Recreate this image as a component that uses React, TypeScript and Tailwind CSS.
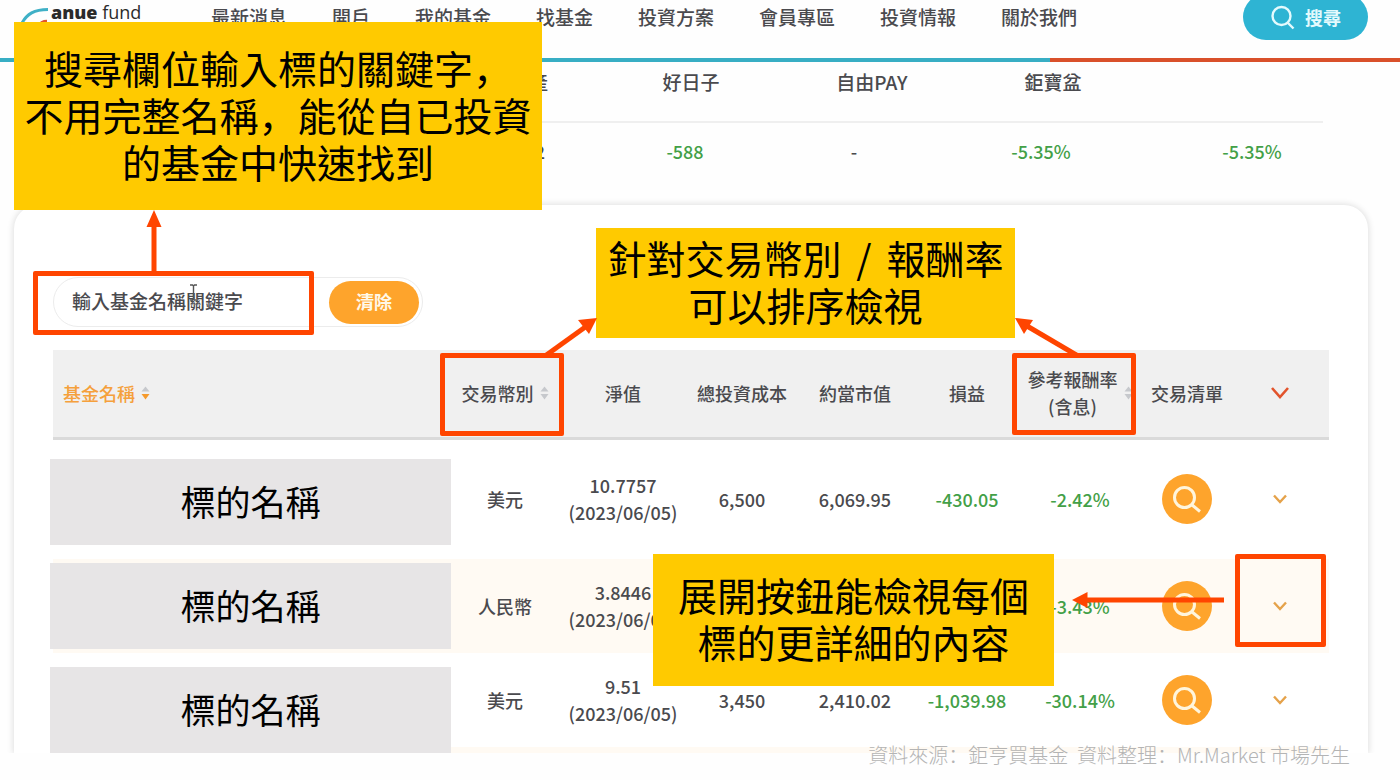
import React from "react";

const navItems = ["最新消息", "開戶", "我的基金", "找基金", "投資方案", "會員專區", "投資情報", "關於我們"];

const summaryHeads = ["資產", "好日子", "自由PAY", "鉅寶盆"];

type Fund = {
  id: string;
  currency: string;
  nav: string;
  date: string;
  cost: string;
  value: string;
  profit: string;
  rate: string;
  row: string;
};

const funds: Fund[] = [
  {
    id: "a",
    currency: "美元",
    nav: "10.7757",
    date: "(2023/06/05)",
    cost: "6,500",
    value: "6,069.95",
    profit: "-430.05",
    rate: "-2.42%",
    row: "h-[121px]",
  },
  {
    id: "b",
    currency: "人民幣",
    nav: "3.8446",
    date: "(2023/06/05)",
    cost: "",
    value: "",
    profit: "",
    rate: "-3.43%",
    row: "h-[94px] bg-[#fffaf3]",
  },
  {
    id: "c",
    currency: "美元",
    nav: "9.51",
    date: "(2023/06/05)",
    cost: "3,450",
    value: "2,410.02",
    profit: "-1,039.98",
    rate: "-30.14%",
    row: "h-[94px]",
  },
];

function SortIcon({ active = false }: { active?: boolean }) {
  return (
    <svg width="9" height="14" viewBox="0 0 9 14" aria-hidden="true" className="shrink-0">
      <path d="M4.500 0.500 8.500 5.500H0.500Z" fill="#c6c8cc" />
      <path d="M4.500 13.500 0.500 8H8.500Z" fill={active ? "#f59a2c" : "#c6c8cc"} />
    </svg>
  );
}

function Chevron({ large = false }: { large?: boolean }) {
  return large ? (
    <svg width="20" height="14" viewBox="0 0 20 14" fill="none" aria-hidden="true">
      <path d="M2 2 10 11 18 2" stroke="#e2542c" strokeWidth="2.6" />
    </svg>
  ) : (
    <svg width="14" height="10" viewBox="0 0 14 10" fill="none" aria-hidden="true">
      <path d="M1 1.500 7 8 13 1.500" stroke="#e5a24a" strokeWidth="2.4" />
    </svg>
  );
}

function RoundSearchIcon() {
  return (
    <svg width="30" height="30" viewBox="0 0 30 30" fill="none" aria-hidden="true">
      <circle cx="12.500" cy="13.500" r="10" stroke="currentColor" strokeWidth="3" />
      <path d="M19.500 20.500 28 27.500" stroke="currentColor" strokeWidth="3" />
    </svg>
  );
}

function SearchIcon() {
  return (
    <svg width="25" height="25" viewBox="0 0 25 25" fill="none" aria-hidden="true">
      <circle cx="11.500" cy="11" r="9" stroke="currentColor" strokeWidth="2.4" />
      <path d="M17.500 17.500 23.500 23.500" stroke="currentColor" strokeWidth="2.4" />
    </svg>
  );
}

function Comma() {
  return <span className="font-['Noto_Sans_CJK_SC',sans-serif]">，</span>;
}

function Header() {
  return (
    <header className="border-b-4 border-[#38aec4]">
      <div className="flex h-[58px] items-start pl-[21px] pr-8">
        <a href="#" aria-label="anue fund" className="flex w-[190px] shrink-0 items-start">
          <svg width="28" height="26" viewBox="0 0 28 26" fill="none" aria-hidden="true">
            <path d="M1 23C6 14 13 9.500 27 9.500" stroke="#3fb0c6" strokeWidth="3" />
            <path d="M17 26C19 22.500 22 21 26 21" stroke="#e2542c" strokeWidth="2.500" />
          </svg>
          <span className="ml-0.5 font-['Open_Sans',sans-serif] text-lg leading-6 text-[#2b2b2b]">
            <b className="font-extrabold">anue</b> fund
          </span>
        </a>
        <nav className="flex gap-[45px] pt-[3px] text-[19px] font-medium leading-7 text-[#4a4a4e]">
          {navItems.map((item) => (
            <a key={item} href="#" className="whitespace-nowrap">
              {item}
            </a>
          ))}
        </nav>
        <button
          type="button"
          className="-mt-1.5 ml-auto flex h-[46px] w-[125px] items-center justify-center gap-2.5 rounded-full bg-[#2eb4d3] text-lg font-bold text-[#e4fafd]"
        >
          <SearchIcon />
          搜尋
        </button>
      </div>
    </header>
  );
}

function Summary() {
  return (
    <table className="mr-[77px] ml-[53px] block text-[#4a4a4e]">
      <thead className="block border-b-2 border-[#efefef]">
        <tr className="grid h-[59px] grid-cols-[1fr_180px_182px_180px_180px] pt-1.5">
          {summaryHeads.map((h) => (
            <th key={h} className="text-center text-[19px] font-medium leading-7 first:pr-[53px] first:text-right">
              {h}
            </th>
          ))}
          <td />
        </tr>
      </thead>
      <tbody className="block">
        <tr className="grid grid-cols-[1fr_244px_94px_280px_142px] pt-3.5 text-lg font-medium leading-7">
          <td className="pr-[18px] text-right">2</td>
          <td className="text-center text-[#43a047]">-588</td>
          <td className="text-center">-</td>
          <td className="text-center text-[#43a047]">-5.35%</td>
          <td className="text-center text-[#43a047]">-5.35%</td>
        </tr>
      </tbody>
    </table>
  );
}

function FundTable() {
  return (
    <table className="w-full table-fixed text-center text-lg text-[#4a4a4e]">
      <colgroup>
        <col className="w-[397px]" />
        <col className="w-[110px]" />
        <col className="w-[126px]" />
        <col className="w-[112px]" />
        <col className="w-[114px]" />
        <col className="w-[110px]" />
        <col className="w-[116px]" />
        <col className="w-[98px]" />
        <col />
      </colgroup>
      <thead>
        <tr className="h-[88px] border-b-[3px] border-[#dadada] bg-[#f0f0f0] leading-[27px] [&>th]:font-medium">
          <th>
            <button type="button" className="flex items-center gap-1.5 pl-2.5 text-[#f5a03c]">
              基金名稱
              <SortIcon active />
            </button>
          </th>
          <th>
            <button type="button" className="mx-auto flex items-center gap-1.5">
              交易幣別
              <SortIcon />
            </button>
          </th>
          <th>淨值</th>
          <th>總投資成本</th>
          <th>約當市值</th>
          <th>損益</th>
          <th>
            <button type="button" className="mx-auto flex items-center gap-1.5 whitespace-nowrap">
              <span>
                參考報酬率
                <br />
                (含息)
              </span>
              <SortIcon />
            </button>
          </th>
          <th>交易清單</th>
          <th className="pr-1.5">
            <button type="button" aria-label="全部展開" className="mx-auto block">
              <Chevron large />
            </button>
          </th>
        </tr>
      </thead>
      <tbody className="font-medium leading-[27px]">
        {funds.map((f) => (
          <tr key={f.id} className={f.row}>
            <td />
            <td>{f.currency}</td>
            <td>
              {f.nav}
              <br />
              {f.date}
            </td>
            <td>{f.cost}</td>
            <td>{f.value}</td>
            <td className="text-[#43a047]">{f.profit}</td>
            <td className="text-[#43a047]">{f.rate}</td>
            <td>
              <button
                type="button"
                aria-label="交易清單"
                className="mx-auto flex size-[50px] items-center justify-center rounded-full bg-[#fea42c] text-[#fff5dc]"
              >
                <RoundSearchIcon />
              </button>
            </td>
            <td className="pr-1.5">
              <button type="button" aria-label="展開" className="mx-auto block">
                <Chevron />
              </button>
            </td>
          </tr>
        ))}
        <tr className="h-1.5 bg-[#fffaf3]">
          <td colSpan={9} />
        </tr>
      </tbody>
    </table>
  );
}

function Annotations() {
  return (
    <div className="pointer-events-none text-[39px] leading-[47px] text-black">
      <div className="absolute left-[50px] top-[459px] flex w-[401px] flex-col gap-[18px] text-[35px]">
        {funds.map((f) => (
          <div key={f.id} className="flex h-[86px] items-center justify-center bg-[#e7e5e6] pb-1">
            標的名稱
          </div>
        ))}
      </div>

      <div className="absolute left-[14px] top-[22px] flex h-[188px] w-[528px] items-center justify-center whitespace-nowrap bg-[#ffca00] pb-1 text-center">
        <p>
          搜尋欄位輸入標的關鍵字
          <Comma />
          <br />
          不用完整名稱
          <Comma />
          能從自已投資
          <br />
          的基金中快速找到
        </p>
      </div>
      <div className="absolute left-[596px] top-[228px] flex h-[110px] w-[419px] items-center justify-center whitespace-nowrap bg-[#ffca00] pb-1 text-center">
        <p>
          針對交易幣別<span className="px-1.5"> / </span>報酬率
          <br />
          可以排序檢視
        </p>
      </div>
      <div className="absolute left-[653px] top-[554px] flex h-[132px] w-[401px] items-center justify-center whitespace-nowrap bg-[#ffca00] pb-1 text-center">
        <p>
          展開按鈕能檢視每個
          <br />
          標的更詳細的內容
        </p>
      </div>

      <div className="absolute left-[33px] top-[271px] h-[64px] w-[281px] rounded-xs border-5 border-[#ff4500]" />
      <div className="absolute left-[440px] top-[353px] h-[83px] w-[124px] rounded-xs border-5 border-[#ff4500]" />
      <div className="absolute left-[1012px] top-[353px] h-[82px] w-[124px] rounded-xs border-5 border-[#ff4500]" />
      <div className="absolute left-[1235px] top-[554px] h-[93px] w-[91px] rounded-xs border-5 border-[#ff4500]" />

      <svg className="absolute left-[146px] top-[210px]" width="16" height="64" viewBox="0 0 16 64" aria-hidden="true">
        <path d="M8 0 15.500 17H10.500V64H5.500V17H0.500Z" fill="#ff4500" />
      </svg>
      <svg className="absolute left-[540px] top-[316px]" width="58" height="44" viewBox="0 0 58 44" aria-hidden="true">
        <path d="M5 40 46 10.500" stroke="#ff4500" strokeWidth="5" />
        <path d="M57 2 49 18 38 4Z" fill="#ff4500" />
      </svg>
      <svg className="absolute left-[1014px] top-[316px]" width="68" height="42" viewBox="0 0 68 42" aria-hidden="true">
        <path d="M64 40 13 10" stroke="#ff4500" strokeWidth="5" />
        <path d="M1 2 19 4 10 18Z" fill="#ff4500" />
      </svg>
      <svg className="absolute left-[1072px] top-[592px]" width="152" height="16" viewBox="0 0 152 16" aria-hidden="true">
        <path d="M0 8 15.500 0V5.500H152V10.500H15.500V16Z" fill="#ff4500" />
      </svg>
    </div>
  );
}

export default function App() {
  return (
    <div className="relative min-h-screen overflow-hidden bg-[#fefefe] font-['Noto_Sans_CJK_TC','Noto_Sans_CJK_SC',sans-serif]">
      <div className="relative">
        <Header />
        <div className="absolute right-0 top-[58px] h-1 w-1/4 bg-[#d9502a]" />
      </div>

      <main className="overflow-hidden">
        <Summary />
        <section className="ml-[14px] mr-[32px] mt-10 rounded-t-[24px] bg-white px-[39px] pt-[72px] shadow-[0_0_6px_1px_rgba(0,0,0,0.12)]">
          <form
            className="mb-[23px] flex h-[50px] w-[370px] items-center rounded-full border border-[#ececec] pl-[18px] pr-[3px]"
            onSubmit={(e) => e.preventDefault()}
          >
            <input
              type="text"
              aria-label="輸入基金名稱關鍵字"
              placeholder="輸入基金名稱關鍵字"
              className="min-w-0 flex-1 bg-transparent pb-0.5 text-[19px] font-medium text-[#4a4a4e] placeholder:text-[#4a4a4e]"
            />
            <button
              type="reset"
              className="h-[43px] w-[90px] rounded-full bg-[#fea42c] pb-0.5 text-lg font-bold text-[#fff8e8]"
            >
              清除
            </button>
          </form>
          <FundTable />
        </section>
      </main>

      <footer className="relative -mt-2.5 whitespace-pre pr-[50px] text-right text-xl font-light leading-6 text-[#b4b4b4]">
        資料來源<span className="font-['Noto_Sans_CJK_SC',sans-serif]">：</span>鉅亨買基金{"  "}資料整理
        <span className="font-['Noto_Sans_CJK_SC',sans-serif]">：</span>Mr.Market 市場先生
      </footer>

      <Annotations />
      <svg
        className="pointer-events-none absolute left-[189px] top-[284px]"
        width="9"
        height="17"
        viewBox="0 0 9 17"
        fill="none"
        aria-hidden="true"
      >
        <path d="M1 1H3.500L4.500 2 5.500 1H8M4.500 2V15M1 16H3.500L4.500 15 5.500 16H8" stroke="#555" strokeWidth="1.400" />
      </svg>
    </div>
  );
}
